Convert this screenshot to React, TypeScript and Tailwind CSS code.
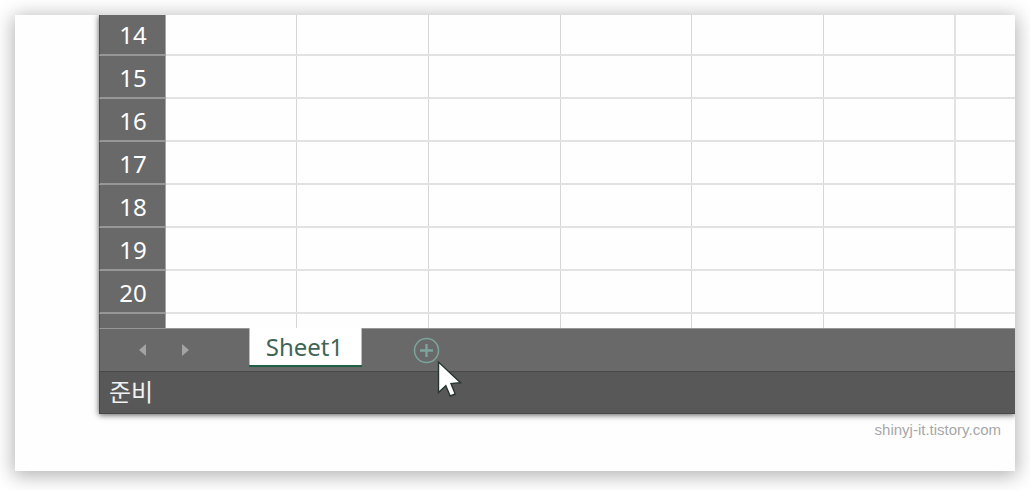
const rows = [14, 15, 16, 17, 18, 19, 20];

function GridRow({ label, first = false }: { label?: number; first?: boolean }) {
  const height = label === undefined ? 'h-[14px]' : first ? 'h-[41px] pt-0' : 'h-[43px]';
  const line = label === undefined ? '' : 'border-b-2';

  return (
    <div className={`flex shrink-0 ${height}`}>
      <div
        className={`flex w-[67px] shrink-0 items-center justify-center border-r border-l border-r-[#a6a6a6] border-b-[#979797] border-l-[#505050] bg-[#696969] pl-px text-[24px] leading-none text-white ${first ? 'pt-px' : 'pt-[3px]'} ${line}`}
      >
        {label}
      </div>
      <div
        className={`grid flex-1 grid-cols-[131px_132px_132px_131px_132px_132px_1fr] border-[#e2e2e2] ${line}`}
      >
        {[0, 1, 2, 3, 4].map((col) => (
          <div key={col} className="border-r border-[#d6d6d6]" />
        ))}
        <div className="border-r-2 border-[#e2e2e2]" />
      </div>
    </div>
  );
}

function SheetBar() {
  return (
    <div className="flex h-[43px] shrink-0 items-start border-t border-l border-t-[#969696] border-l-[#505050] bg-[#696969]">
      <svg className="mt-[14px] ml-[38px] h-[14px] w-[56px]" viewBox="0 0 56 14" fill="#a3a3a3">
        <path d="M8 1v12L1 7z" />
        <path d="M44 1v12l7-6z" />
      </svg>
      <div className="-mt-px ml-[55px] flex h-[39px] w-[113px] items-center justify-center border-b-2 border-[#1f6145] bg-white pt-px pr-[2px] text-[24px] leading-none text-[#3f6556] shadow-[inset_1px_0_#bdbdbd,inset_-1px_0_#bdbdbd]">
        Sheet1
      </div>
      <svg className="mt-[8px] ml-[51px] h-[28px] w-[28px]" viewBox="0 0 28 28" fill="none" stroke="#7da49c">
        <circle cx="13.5" cy="13.5" r="12" strokeWidth="1.5" />
        <path d="M13.5 7v13M7 13.5h13" strokeWidth="2.3" />
      </svg>
    </div>
  );
}

function Cursor() {
  return (
    <svg className="absolute top-[344px] left-[421px] h-[42px] w-[28px]" viewBox="0 0 28 42">
      <path
        d="M2.5 3v30.5l7.3-6.8 4.4 10.3 5-2-4.2-10.4 9.5-.9z"
        fill="#fff"
        stroke="#26362f"
        strokeWidth="1.4"
      />
    </svg>
  );
}

export default function App() {
  return (
    <main className="h-[490px] w-[1030px] overflow-hidden bg-white p-[15px] font-['Noto_Sans','Noto_Sans_CJK_KR',sans-serif]">
      <div className="h-[456px] w-[1000px] bg-[#fefefe] shadow-[0_3px_18px_2px_rgba(0,0,0,0.3)]">
        <div className="relative h-full overflow-hidden">
          <div className="ml-[84px] flex h-[399px] flex-col bg-[#fefefe] shadow-[0_1px_6px_rgba(0,0,0,0.65)]">
            {rows.map((row, i) => (
              <GridRow key={row} label={row} first={i === 0} />
            ))}
            <GridRow />
            <SheetBar />
            <div className="h-[43px] shrink-0 border border-r-0 border-[#484848] bg-[#585858] pt-[4px] pl-[9px] font-['Noto_Sans_CJK_KR',sans-serif] text-[24px] leading-[30px] text-[#f1f1f1]">
              준비
            </div>
          </div>
          <p className="mt-[6px] pr-[14px] text-right font-['Liberation_Sans',sans-serif] text-[15px] leading-5 text-[#a7a7a7]">
            shinyj-it.tistory.com
          </p>
          <Cursor />
        </div>
      </div>
    </main>
  );
}
